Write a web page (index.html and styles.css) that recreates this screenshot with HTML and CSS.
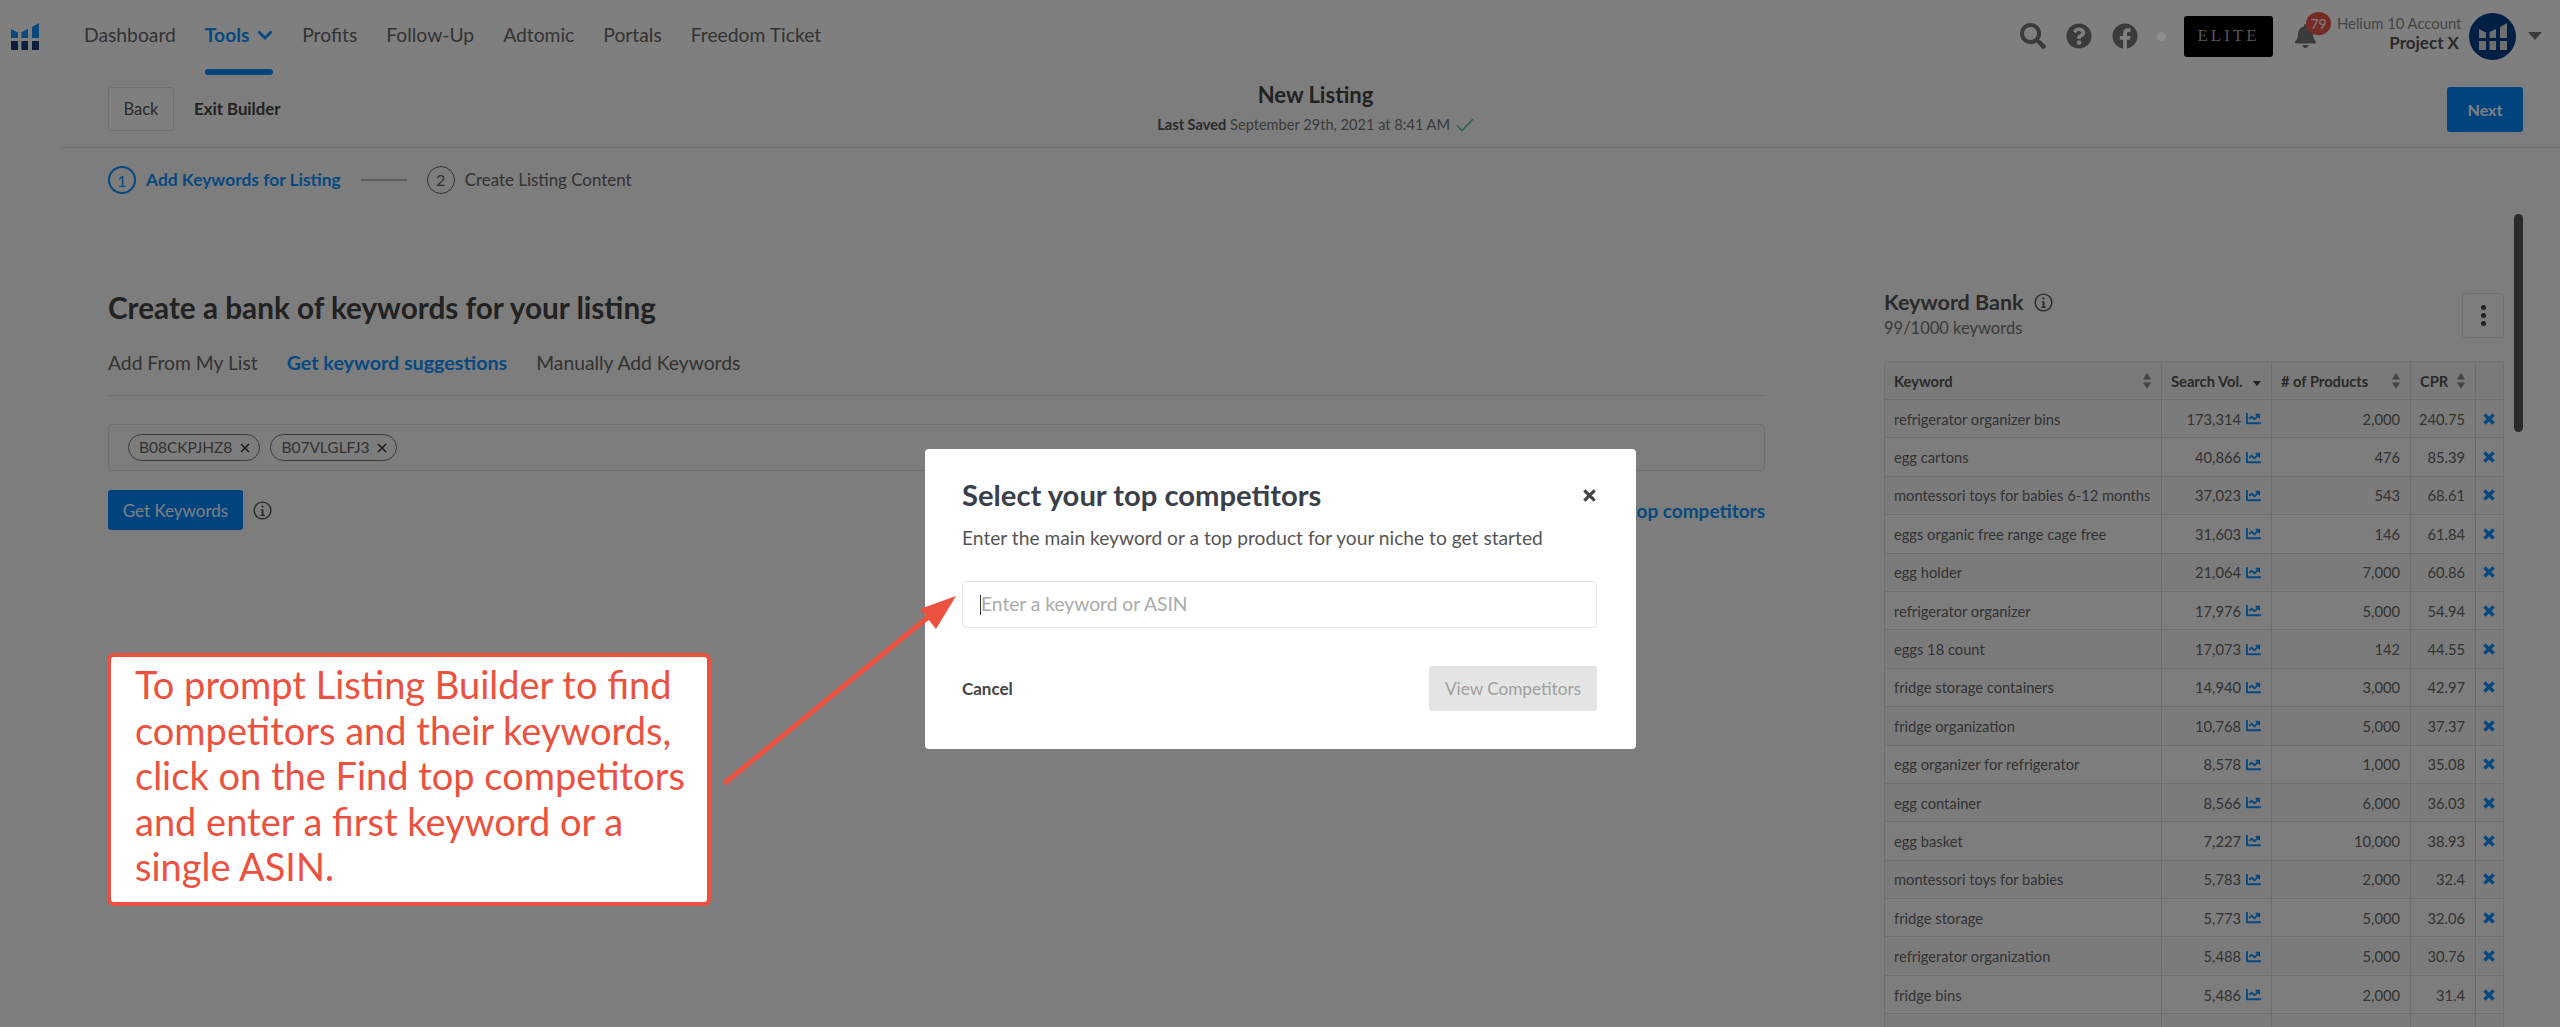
FILE: index.html
```html
<!DOCTYPE html>
<html lang="en">
<head>
<meta charset="utf-8">
<title>New Listing</title>
<link rel="stylesheet" href="styles.css">
</head>
<body>
<svg class="defs" width="0" height="0" aria-hidden="true">
  <symbol id="i-chart" viewBox="0 0 512 512"><path d="M496 384H64V80c0-8.84-7.16-16-16-16H16C7.16 64 0 71.16 0 80v336c0 17.67 14.33 32 32 32h464c8.84 0 16-7.16 16-16v-32c0-8.84-7.16-16-16-16zM464 96H345.94c-21.38 0-32.09 25.85-16.97 40.97l32.4 32.4L288 242.75l-73.37-73.37c-12.5-12.5-32.76-12.5-45.25 0l-68.69 68.69c-6.25 6.25-6.25 16.38 0 22.63l22.62 22.62c6.25 6.25 16.38 6.25 22.63 0L192 237.25l73.37 73.37c12.5 12.5 32.76 12.5 45.25 0l96-96 32.4 32.4c15.12 15.12 40.97 4.41 40.97-16.97V112c0-8.84-7.16-16-16-16z"/></symbol>
  <symbol id="i-x" viewBox="0 0 10 10"><path d="M1.2 1.2l7.6 7.6M8.8 1.2L1.2 8.8" fill="none" stroke="currentColor" stroke-width="2.800"/></symbol>
  <symbol id="i-sort" viewBox="0 0 8 16"><path d="M4 0l4 6.5H0zM4 16L0 9.5h8z"/></symbol>
  <symbol id="i-info" viewBox="0 0 20 20"><circle cx="10" cy="10" r="8.8" fill="none" stroke="currentColor" stroke-width="1.5"/><circle cx="10" cy="5.9" r="1.2"/><path d="M8 8.6h3v6h1.3v1.2H7.8v-1.2h1.3V9.8H8z"/></symbol>
</svg>

<div class="page">
  <header class="nav">
    <svg class="logo" viewBox="0 0 28 27" aria-hidden="true">
      <path class="logo-top" d="M0 6l7 3.500V15H0zM10.500 9L17 6v9h-6.500zM21 4l7-4v15h-7z"/>
      <path class="logo-bottom" d="M0 18h7v9H0zM10.500 18H17v9h-6.500zM21 18h7v9h-7z"/>
    </svg>
    <nav class="menu">
      <a class="menu-item">Dashboard</a>
      <a class="menu-item menu-active">Tools
        <svg class="chev" viewBox="0 0 16 10" aria-hidden="true"><path d="M1.500 1.500L8 8l6.500-6.500" fill="none" stroke="currentColor" stroke-width="2.800"/></svg>
      </a>
      <a class="menu-item">Profits</a>
      <a class="menu-item">Follow-Up</a>
      <a class="menu-item">Adtomic</a>
      <a class="menu-item">Portals</a>
      <a class="menu-item">Freedom Ticket</a>
    </nav>
    <div class="nav-right">
      <svg class="ico" viewBox="0 0 512 512" aria-hidden="true"><path d="M505 442.700L405.300 343c-4.500-4.500-10.600-7-17-7H372c27.600-35.300 44-79.700 44-128C416 93.100 322.900 0 208 0S0 93.100 0 208s93.100 208 208 208c48.300 0 92.700-16.400 128-44v16.300c0 6.400 2.500 12.500 7 17l99.700 99.700c9.400 9.400 24.600 9.400 33.900 0l28.300-28.300c9.400-9.400 9.400-24.600.1-34zM208 336c-70.700 0-128-57.200-128-128 0-70.700 57.200-128 128-128 70.700 0 128 57.200 128 128 0 70.700-57.200 128-128 128z"/></svg>
      <svg class="ico" viewBox="0 0 512 512" aria-hidden="true"><path d="M504 256c0 136.997-111.043 248-248 248S8 392.997 8 256C8 119.083 119.043 8 256 8s248 111.083 248 248zM262.655 90c-54.497 0-89.255 22.957-116.549 63.758-3.536 5.286-2.353 12.415 2.715 16.258l34.699 26.310c5.205 3.947 12.621 3.008 16.665-2.122 17.864-22.658 30.113-35.797 57.303-35.797 20.429 0 45.698 13.148 45.698 32.958 0 14.976-12.363 22.667-32.534 33.976C247.128 238.528 216 254.941 216 296v4c0 6.627 5.373 12 12 12h56c6.627 0 12-5.373 12-12v-1.333c0-28.462 83.186-29.647 83.186-106.667 0-58.002-60.165-102-116.531-102zM256 338c-25.365 0-46 20.635-46 46 0 25.364 20.635 46 46 46s46-20.636 46-46c0-25.365-20.635-46-46-46z"/></svg>
      <svg class="ico" viewBox="0 0 512 512" aria-hidden="true"><path d="M504 256C504 119 393 8 256 8S8 119 8 256c0 123.780 90.690 226.380 209.250 245V327.690h-63V256h63v-54.640c0-62.150 37-96.480 93.670-96.480 27.140 0 55.520 4.840 55.520 4.840v61h-31.280c-30.800 0-40.410 19.120-40.410 38.730V256h68.780l-11 71.690h-57.780V501C413.310 482.380 504 379.780 504 256z"/></svg>
      <span class="dot"></span>
      <span class="elite">ELITE</span>
      <span class="bell">
        <svg class="bell-ico" viewBox="0 0 448 512" aria-hidden="true"><path d="M224 512c35.320 0 63.970-28.650 63.970-64H160.030c0 35.350 28.650 64 63.970 64zm215.390-149.710c-19.320-20.760-55.470-51.990-55.470-154.290 0-77.700-54.480-139.900-127.940-155.160V32c0-17.670-14.320-32-31.980-32s-31.980 14.330-31.980 32v20.840C118.560 68.100 64.080 130.300 64.080 208c0 102.300-36.150 133.530-55.470 154.290-6 6.450-8.660 14.160-8.610 21.710.11 16.400 12.980 32 32.100 32h383.800c19.120 0 32-15.600 32.100-32 .05-7.550-2.610-15.270-8.610-21.710z"/></svg>
        <span class="badge">79</span>
      </span>
      <div class="account">
        <span class="account-label">Helium 10 Account</span>
        <span class="account-name">Project X</span>
      </div>
      <span class="avatar">
        <svg class="avatar-logo" viewBox="0 0 28 27" aria-hidden="true"><path d="M0 6l7 3.500V15H0zM10.500 9L17 6v9h-6.500zM21 4l7-4v15h-7zM0 18h7v9H0zM10.500 18H17v9h-6.500zM21 18h7v9h-7z"/></svg>
      </span>
      <span class="caret"></span>
    </div>
  </header>

  <section class="sub">
    <div class="sub-left">
      <button class="btn-back">Back</button>
      <a class="exit">Exit Builder</a>
    </div>
    <div class="sub-center">
      <div class="sub-title">New Listing</div>
      <div class="saved"><b>Last Saved</b> September 29th, 2021 at 8:41 AM
        <svg class="check" viewBox="0 0 18 14" aria-hidden="true"><path d="M1 7.500l5 5L17 1" fill="none" stroke="currentColor" stroke-width="1.600"/></svg>
      </div>
    </div>
    <div class="sub-right"><button class="btn-next">Next</button></div>
  </section>

  <section class="stepper">
    <span class="step-num step-on">1</span>
    <span class="step-label step-label-on">Add Keywords for Listing</span>
    <span class="step-line"></span>
    <span class="step-num">2</span>
    <span class="step-label">Create Listing Content</span>
  </section>

  <main class="main">
    <section class="left">
      <h1 class="heading">Create a bank of keywords for your listing</h1>
      <div class="tabs">
        <a class="tab">Add From My List</a>
        <a class="tab tab-on">Get keyword suggestions</a>
        <a class="tab">Manually Add Keywords</a>
      </div>
      <div class="chips">
        <span class="chip">B08CKPJHZ8 <svg class="chip-x" viewBox="0 0 10 10" aria-hidden="true"><path d="M1 1l8 8M9 1L1 9" fill="none" stroke="currentColor" stroke-width="1.500"/></svg></span>
        <span class="chip">B07VLGLFJ3 <svg class="chip-x" viewBox="0 0 10 10" aria-hidden="true"><path d="M1 1l8 8M9 1L1 9" fill="none" stroke="currentColor" stroke-width="1.500"/></svg></span>
      </div>
      <div class="actions">
        <div class="actions-left">
          <button class="btn-get">Get Keywords</button>
          <svg class="info" aria-hidden="true"><use href="#i-info"/></svg>
        </div>
        <a class="find">Find top competitors</a>
      </div>
    </section>

    <aside class="right">
      <div class="bank-head">
        <div>
          <div class="bank-title">Keyword Bank <svg class="info" aria-hidden="true"><use href="#i-info"/></svg></div>
          <div class="bank-sub">99/1000 keywords</div>
        </div>
        <button class="kebab" aria-label="More"><i></i><i></i><i></i></button>
      </div>
      <div class="tbl">
        <div class="tr th">
          <div class="td">Keyword <svg class="sort" aria-hidden="true"><use href="#i-sort"/></svg></div>
          <div class="td">Search Vol. <span class="sort-down"></span></div>
          <div class="td"># of Products <svg class="sort" aria-hidden="true"><use href="#i-sort"/></svg></div>
          <div class="td">CPR <svg class="sort" aria-hidden="true"><use href="#i-sort"/></svg></div>
          <div class="td"></div>
        </div>
        <div class="tr"><div class="td">refrigerator organizer bins</div><div class="td num">173,314 <svg class="chart"><use href="#i-chart"/></svg></div><div class="td num">2,000</div><div class="td num">240.75</div><div class="td"><svg class="x"><use href="#i-x"/></svg></div></div>
        <div class="tr"><div class="td">egg cartons</div><div class="td num">40,866 <svg class="chart"><use href="#i-chart"/></svg></div><div class="td num">476</div><div class="td num">85.39</div><div class="td"><svg class="x"><use href="#i-x"/></svg></div></div>
        <div class="tr"><div class="td">montessori toys for babies 6-12 months</div><div class="td num">37,023 <svg class="chart"><use href="#i-chart"/></svg></div><div class="td num">543</div><div class="td num">68.61</div><div class="td"><svg class="x"><use href="#i-x"/></svg></div></div>
        <div class="tr"><div class="td">eggs organic free range cage free</div><div class="td num">31,603 <svg class="chart"><use href="#i-chart"/></svg></div><div class="td num">146</div><div class="td num">61.84</div><div class="td"><svg class="x"><use href="#i-x"/></svg></div></div>
        <div class="tr"><div class="td">egg holder</div><div class="td num">21,064 <svg class="chart"><use href="#i-chart"/></svg></div><div class="td num">7,000</div><div class="td num">60.86</div><div class="td"><svg class="x"><use href="#i-x"/></svg></div></div>
        <div class="tr"><div class="td">refrigerator organizer</div><div class="td num">17,976 <svg class="chart"><use href="#i-chart"/></svg></div><div class="td num">5,000</div><div class="td num">54.94</div><div class="td"><svg class="x"><use href="#i-x"/></svg></div></div>
        <div class="tr"><div class="td">eggs 18 count</div><div class="td num">17,073 <svg class="chart"><use href="#i-chart"/></svg></div><div class="td num">142</div><div class="td num">44.55</div><div class="td"><svg class="x"><use href="#i-x"/></svg></div></div>
        <div class="tr"><div class="td">fridge storage containers</div><div class="td num">14,940 <svg class="chart"><use href="#i-chart"/></svg></div><div class="td num">3,000</div><div class="td num">42.97</div><div class="td"><svg class="x"><use href="#i-x"/></svg></div></div>
        <div class="tr"><div class="td">fridge organization</div><div class="td num">10,768 <svg class="chart"><use href="#i-chart"/></svg></div><div class="td num">5,000</div><div class="td num">37.37</div><div class="td"><svg class="x"><use href="#i-x"/></svg></div></div>
        <div class="tr"><div class="td">egg organizer for refrigerator</div><div class="td num">8,578 <svg class="chart"><use href="#i-chart"/></svg></div><div class="td num">1,000</div><div class="td num">35.08</div><div class="td"><svg class="x"><use href="#i-x"/></svg></div></div>
        <div class="tr"><div class="td">egg container</div><div class="td num">8,566 <svg class="chart"><use href="#i-chart"/></svg></div><div class="td num">6,000</div><div class="td num">36.03</div><div class="td"><svg class="x"><use href="#i-x"/></svg></div></div>
        <div class="tr"><div class="td">egg basket</div><div class="td num">7,227 <svg class="chart"><use href="#i-chart"/></svg></div><div class="td num">10,000</div><div class="td num">38.93</div><div class="td"><svg class="x"><use href="#i-x"/></svg></div></div>
        <div class="tr"><div class="td">montessori toys for babies</div><div class="td num">5,783 <svg class="chart"><use href="#i-chart"/></svg></div><div class="td num">2,000</div><div class="td num">32.4</div><div class="td"><svg class="x"><use href="#i-x"/></svg></div></div>
        <div class="tr"><div class="td">fridge storage</div><div class="td num">5,773 <svg class="chart"><use href="#i-chart"/></svg></div><div class="td num">5,000</div><div class="td num">32.06</div><div class="td"><svg class="x"><use href="#i-x"/></svg></div></div>
        <div class="tr"><div class="td">refrigerator organization</div><div class="td num">5,488 <svg class="chart"><use href="#i-chart"/></svg></div><div class="td num">5,000</div><div class="td num">30.76</div><div class="td"><svg class="x"><use href="#i-x"/></svg></div></div>
        <div class="tr"><div class="td">fridge bins</div><div class="td num">5,486 <svg class="chart"><use href="#i-chart"/></svg></div><div class="td num">2,000</div><div class="td num">31.4</div><div class="td"><svg class="x"><use href="#i-x"/></svg></div></div>
        <div class="tr"><div class="td">fridge containers</div><div class="td num">4,906 <svg class="chart"><use href="#i-chart"/></svg></div><div class="td num">3,000</div><div class="td num">29.44</div><div class="td"><svg class="x"><use href="#i-x"/></svg></div></div>
      </div>
    </aside>
  </main>
  <div class="scrollbar"></div>
</div>

<div class="overlay"></div>

<div class="modal">
  <div class="modal-head">
    <h2 class="modal-title">Select your top competitors</h2>
    <svg class="modal-close" viewBox="0 0 10 10" aria-hidden="true"><path d="M1 1l8 8M9 1L1 9" fill="none" stroke="currentColor" stroke-width="2.400"/></svg>
  </div>
  <p class="modal-sub">Enter the main keyword or a top product for your niche to get started</p>
  <div class="modal-input"><span class="cursor"></span>Enter a keyword or ASIN</div>
  <div class="modal-foot">
    <a class="cancel">Cancel</a>
    <button class="btn-view">View Competitors</button>
  </div>
</div>

<svg class="arrow" viewBox="0 0 2560 1027" aria-hidden="true">
  <line x1="726" y1="782" x2="932" y2="614" stroke="#ec5140" stroke-width="5" stroke-linecap="round"/>
  <polygon points="956,596 920,609 936,629" fill="#ec5140"/>
</svg>

<div class="note">To prompt Listing Builder to find<br>competitors and their keywords,<br>click on the Find top competitors<br>and enter a first keyword or a<br>single ASIN.</div>
</body>
</html>
```

FILE: styles.css
```css
* { box-sizing: border-box; }
html, body { margin: 0; height: 1027px; overflow: hidden; }
body { font-family: "Lato", "Liberation Sans", sans-serif; color: #555; background: #fafafa; position: relative; }
button { font: inherit; }
a { cursor: pointer; }
.defs { position: absolute; }

.page { width: 2560px; height: 1027px; overflow: hidden; position: relative; }

/* top nav */
.nav { height: 72px; background: #fff; display: flex; align-items: center; padding: 0 18px 0 11px; }
.logo { width: 28px; height: 27px; flex: none; }
.logo-top { fill: #0f92ff; }
.logo-bottom { fill: #143f7c; }
.menu { display: flex; margin-left: 45px; height: 72px; gap: 29px; }
.menu-item { font-size: 19.300px; line-height: 70px; color: #666; white-space: nowrap; position: relative; height: 72px; }
.menu-active { color: #0e92ff; font-weight: 700; }
.menu-active::after { content: ""; position: absolute; left: 0; right: 0; bottom: -3px; height: 6px; border-radius: 3px; background: #0088ff; }
.chev { width: 16px; height: 10px; margin-left: 3px; vertical-align: 2px; }
.nav-right { margin-left: auto; display: flex; align-items: center; }
.ico { width: 26px; height: 26px; fill: #777; margin-right: 20px; flex: none; }
.dot { width: 9px; height: 9px; border-radius: 50%; background: #8f8f8f; margin: 0 18px 0 -1px; position: relative; z-index: 1; }
.elite { width: 89px; height: 41px; background: #000; border-radius: 3px; color: #aaa; font: 17px "Liberation Serif", serif; letter-spacing: 3px; display: flex; align-items: center; justify-content: center; }
.bell { width: 37px; height: 48px; margin-left: 21px; position: relative; }
.bell-ico { position: absolute; left: 0; top: 12px; width: 23px; height: 24px; fill: #777; }
.badge { position: absolute; left: 12px; top: 0; width: 25px; height: 23px; border-radius: 50%; background: #e8564a; color: #fff; font-size: 14px; line-height: 23px; text-align: center; }
.account { margin: -6px 0 0 6px; width: 122px; text-align: right; display: flex; flex-direction: column; }
.account-label { font-size: 14.800px; line-height: 20px; color: #888; white-space: nowrap; }
.account-name { font-size: 17px; line-height: 20px; font-weight: 700; color: #555; }
.avatar { width: 47px; height: 47px; border-radius: 50%; background: #003e8a; margin-left: 10px; display: flex; align-items: center; justify-content: center; }
.avatar-logo { width: 28px; height: 27px; fill: #ddd; }
.caret { width: 0; height: 0; border: 7px solid transparent; border-top: 8px solid #777; border-bottom: 0; margin-left: 12px; }

/* sub header */
.sub { height: 76px; margin-left: 61px; padding: 15px 37px 0 47px; border-bottom: 1px solid #ddd; display: grid; grid-template-columns: 1fr auto 1fr; }
.sub-left { display: flex; align-items: flex-start; }
.btn-back { width: 66px; height: 44px; background: #fff; border: 1px solid #e2e2e2; border-radius: 3px; color: #555; font-size: 16.500px; padding: 0; }
.exit { margin-left: 20px; line-height: 44px; font-size: 16.800px; font-weight: 700; color: #444; }
.sub-center { text-align: center; }
.sub-title { font-size: 22px; font-weight: 700; color: #444; line-height: 26px; margin-top: -5px; }
.saved { font-size: 14.600px; color: #777; line-height: 20px; margin-top: 7px; }
.saved b { color: #555; }
.check { width: 18px; height: 14px; color: #5fcf90; vertical-align: -2px; margin-left: 2px; }
.sub-right { display: flex; justify-content: flex-end; }
.btn-next { width: 76px; height: 45px; background: #0088ff; border: 0; border-radius: 3px; color: #fff; font-size: 16px; font-weight: 700; padding: 0; }

/* stepper */
.stepper { height: 64px; padding: 18px 0 0 108px; display: flex; align-items: flex-start; }
.step-num { width: 28px; height: 28px; border-radius: 50%; border: 1.500px solid #666; color: #666; font-size: 16px; line-height: 25px; text-align: center; flex: none; }
.step-on { border: 2px solid #0e92ff; color: #0e92ff; }
.step-label { font-size: 16.900px; line-height: 28px; color: #666; margin-left: 10px; white-space: nowrap; }
.step-label-on { color: #0e92ff; font-weight: 700; font-size: 17.400px; }
.step-line { width: 46px; height: 2px; background: #bbb; margin: 13px 20px 0 20px; }

/* main */
.main { display: flex; padding: 78px 0 0 108px; }
.left { width: 1657px; flex: none; }
.heading { margin: 0; font-size: 29.700px; line-height: 36px; font-weight: 700; color: #444; }
.tabs { display: flex; gap: 29px; margin-top: 25px; padding-bottom: 20px; height: 45px; border-bottom: 1px solid #e2e2e2; line-height: 24px; font-size: 19.300px; color: #666; }
.tab-on { color: #0e92ff; font-weight: 700; font-size: 19.700px; }
.chips { margin-top: 28px; height: 47px; border: 1px solid #e2e2e2; border-radius: 4px; padding: 9px 0 0 19px; display: flex; gap: 10px; }
.chip { height: 27px; padding: 0 9px 0 10px; border: 1px solid #777; border-radius: 14px; font-size: 15.500px; line-height: 25px; color: #666; white-space: nowrap; display: flex; align-items: center; gap: 8px; }
.chip-x { width: 10px; height: 10px; color: #333; }
.actions { margin-top: 19px; height: 40px; display: flex; justify-content: space-between; align-items: center; }
.actions-left { display: flex; align-items: center; gap: 10px; }
.btn-get { width: 135px; height: 40px; background: #0088ff; border: 0; border-radius: 3px; color: #fff; font-size: 17px; padding: 0; }
.info { width: 19px; height: 19px; color: #555; fill: #555; flex: none; }
.find { font-size: 19px; font-weight: 700; color: #0e92ff; }

.right { width: 620px; margin-left: 119px; flex: none; }
.bank-head { height: 71px; display: flex; justify-content: space-between; align-items: flex-start; }
.bank-title { font-size: 21.500px; line-height: 24px; font-weight: 700; color: #555; display: flex; align-items: center; gap: 10px; }
.bank-sub { font-size: 16.500px; line-height: 20px; margin-top: 4px; color: #777; }
.kebab { width: 42px; height: 45px; margin-top: 3px; background: transparent; border: 1px solid #e2e2e2; border-radius: 3px; display: flex; flex-direction: column; align-items: center; justify-content: center; gap: 3px; padding: 0; }
.kebab i { width: 5px; height: 5px; border-radius: 50%; background: #444; }

.tbl { border: 1px solid #e2e2e2; border-bottom: 0; border-radius: 3px 3px 0 0; }
.tr { display: grid; grid-template-columns: 277px 110px 139px 65px 1fr; height: 38.400px; border-bottom: 1px solid #dcdcdc; font-size: 14.700px; color: #666; }
.tr:nth-child(even) { background: #f7f7f7; }
.th { height: 38px; background: #f4f4f4; font-weight: 700; color: #555; }
.td { padding: 0 10px 0 9px; display: flex; align-items: center; gap: 5px; border-right: 1px solid #dcdcdc; white-space: nowrap; }
.td:last-child { border-right: 0; padding: 0; justify-content: center; }
.th .td { justify-content: space-between; }
.num { justify-content: flex-end; }
.sort { width: 8px; height: 16px; fill: #888; flex: none; }
.sort-down { width: 0; height: 0; border: 4px solid transparent; border-top: 5px solid #444; border-bottom: 0; margin-top: 6px; }
.chart { width: 15px; height: 15px; fill: #0e92ff; flex: none; }
.x { width: 12px; height: 12px; color: #0e92ff; margin-right: 2px; }

.scrollbar { position: absolute; left: 2514px; top: 214px; width: 9px; height: 218px; border-radius: 5px; background: #555; }

.overlay { position: absolute; inset: 0; background: rgba(0, 0, 0, .5); }

/* modal */
.modal { position: absolute; left: 925px; top: 449px; width: 711px; height: 300px; background: #fff; border-radius: 4px; padding: 28px 39px 0 37px; }
.modal-head { display: flex; justify-content: space-between; align-items: center; }
.modal-title { margin: 0; font-size: 29.200px; line-height: 36px; font-weight: 700; color: #3a3f4a; }
.modal-close { width: 13px; height: 13px; color: #444; margin-right: 1px; }
.modal-sub { margin: 13px 0 0; font-size: 19.200px; line-height: 24px; color: #555; }
.modal-input { margin-top: 31px; height: 47px; border: 1px solid #e4e4e4; border-radius: 4px; padding-left: 17px; font-size: 19.200px; line-height: 44px; color: #aaa; position: relative; }
.cursor { display: inline-block; width: 1px; height: 20px; background: #333; vertical-align: -4px; }
.modal-foot { margin-top: 38px; display: flex; justify-content: space-between; align-items: center; }
.cancel { font-size: 17px; font-weight: 700; color: #444; }
.btn-view { width: 168px; height: 45px; background: #e4e4e4; border: 0; border-radius: 3px; color: #a0a0a0; font-size: 17.200px; padding: 0; }

/* annotation */
.arrow { position: absolute; left: 0; top: 0; width: 2560px; height: 1027px; pointer-events: none; }
.note { position: absolute; left: 107px; top: 653px; width: 604px; height: 253px; background: #fff; border: 4px solid #ec5140; border-radius: 7px; padding: 5px 0 0 24px; font-size: 38px; line-height: 45.500px; font-weight: 400; color: #ec5140; white-space: nowrap; }
```
